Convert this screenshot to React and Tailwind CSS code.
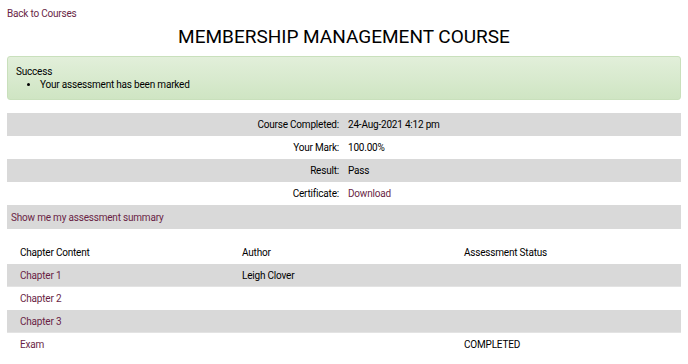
import React from "react";

const link = "text-[#6a1f45]";

export default function App() {
  const info = [
    { label: "Course Completed:", value: "24-Aug-2021 4:12 pm" },
    { label: "Your Mark:", value: "100.00%" },
    { label: "Result:", value: "Pass" },
    { label: "Certificate:", value: "Download", link: true },
  ];

  const chapters = [
    { name: "Chapter 1", author: "Leigh Clover", status: "" },
    { name: "Chapter 2", author: "", status: "" },
    { name: "Chapter 3", author: "", status: "" },
    { name: "Exam", author: "", status: "COMPLETED" },
  ];

  return (
    <div className="w-[688px] h-[364px] overflow-hidden bg-white text-[10px] tracking-[-0.2px] text-black font-['Roboto','Liberation_Sans',sans-serif]">
      <div className="px-[7px] pt-[7px]">
        <a href="#" className={`${link} block leading-[14px]`}>
          Back to Courses
        </a>
        <h1 className="text-center text-[19px] tracking-normal leading-[24px] mt-[4px] text-black">
          MEMBERSHIP MANAGEMENT COURSE
        </h1>

        {/* success message */}
        <div className="mt-[7px] h-[44px] rounded-[3px] border border-[#c9e0bc] bg-gradient-to-b from-[#e2efda] to-[#cfe5c3] pl-[8px] pt-[8px] leading-[13px]">
          <div>Success</div>
          <ul className="list-disc pl-[24px]">
            <li>Your assessment has been marked</li>
          </ul>
        </div>

        {/* result info */}
        <div className="mt-[13px]">
          {info.map((row, idx) => (
            <div
              key={row.label}
              className={`grid grid-cols-2 h-[23px] items-center ${idx % 2 === 0 ? "bg-[#d9d9d9]" : "bg-white"}`}
            >
              <div className="text-right pr-[5px]">{row.label}</div>
              <div className="pl-[4px]">
                {row.link ? (
                  <a href="#" className={link}>
                    {row.value}
                  </a>
                ) : (
                  row.value
                )}
              </div>
            </div>
          ))}
          <div className="h-[24px] flex items-center bg-[#d9d9d9] pl-[4px]">
            <a href="#" className={link}>
              Show me my assessment summary
            </a>
          </div>
        </div>

        {/* chapter list */}
        <div className="mt-[12px]">
          <div className="grid grid-cols-[222px_222px_1fr] h-[23px] items-center">
            <div className="pl-[13px]">Chapter Content</div>
            <div className="pl-[13px]">Author</div>
            <div className="pl-[13px]">Assessment Status</div>
          </div>
          {chapters.map((ch, idx) => (
            <div
              key={ch.name}
              className={`grid grid-cols-[222px_222px_1fr] h-[23px] items-center ${idx % 2 === 0 ? "bg-[#d9d9d9] border-b border-[#e3e3e3]" : "bg-white"}`}
            >
              <div className="pl-[13px]">
                <a href="#" className={link}>
                  {ch.name}
                </a>
              </div>
              <div className="pl-[13px]">{ch.author}</div>
              <div className="pl-[13px]">{ch.status}</div>
            </div>
          ))}
        </div>
      </div>
    </div>
  );
}
